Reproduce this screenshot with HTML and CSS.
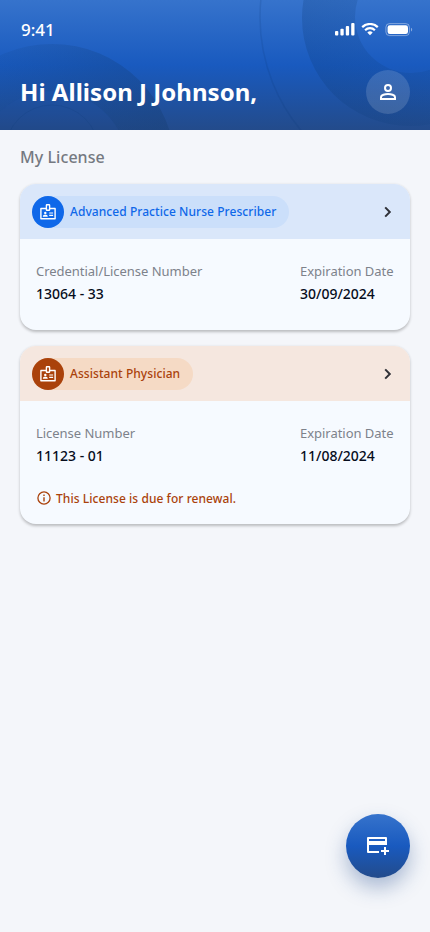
FILE: index.html
```html
<!DOCTYPE html>
<html lang="en">
<head>
<meta charset="utf-8">
<meta name="viewport" content="width=device-width, initial-scale=1">
<title>My License</title>
<link rel="stylesheet" href="styles.css">
</head>
<body>
<svg class="sprite" aria-hidden="true">
  <symbol id="badge" viewBox="0 0 16 16">
    <path fill="none" stroke="currentColor" stroke-width="1.4" stroke-linejoin="round" d="M6.200 4.500H.9v10.200h14.200V4.500H9.800"/>
    <rect x="6.400" y=".7" width="3.200" height="5.600" rx=".5" fill="none" stroke="currentColor" stroke-width="1.400"/>
    <circle cx="5.300" cy="9" r="1.200" fill="currentColor"/>
    <path fill="currentColor" d="M2.900 12.800v-.6c0-1 1.400-1.400 2.400-1.400s2.400.4 2.400 1.400v.6zM9.200 8.400h3.900v1.100H9.200zM9.200 10.800h3.900v1.100H9.200z"/>
  </symbol>
</svg>
<header class="header">
  <svg class="rings" viewBox="0 0 430 130" aria-hidden="true">
    <defs>
      <linearGradient id="fade-left" gradientUnits="userSpaceOnUse" x1="0" y1="60" x2="165" y2="100">
        <stop offset="0" stop-color="#0d3b77" stop-opacity=".1"/>
        <stop offset="1" stop-color="#153c70" stop-opacity=".34"/>
      </linearGradient>
      <linearGradient id="fade-right" gradientUnits="userSpaceOnUse" x1="310" y1="60" x2="430" y2="30">
        <stop offset="0" stop-color="#0d3b77" stop-opacity=".24"/>
        <stop offset="1" stop-color="#0d3b77" stop-opacity=".12"/>
      </linearGradient>
    </defs>
    <path fill="url(#fade-left)" fill-rule="evenodd" d="M-71 167a123 123 0 1 0 246 0a123 123 0 1 0-246 0zM-24 167a76 76 0 1 0 152 0a76 76 0 1 0-152 0z"/>
    <circle class="disc" cx="52" cy="167" r="76"/>
    <circle class="arc faint" cx="52" cy="152" r="47"/>
    <path fill="url(#fade-right)" fill-rule="evenodd" d="M302 18a108 108 0 1 0 216 0a108 108 0 1 0-216 0zM355 17a56 56 0 1 0 112 0a56 56 0 1 0-112 0z"/>
    <circle class="arc" cx="437" cy="17" r="177"/>
  </svg>
  <div class="status">
    <span class="time">9:41</span>
    <svg class="signals" width="78" height="14" viewBox="0 0 78 14" fill="#fff" aria-hidden="true">
      <rect x="0" y="8" width="3.300" height="4.600" rx="1"/><rect x="5.400" y="5.800" width="3.300" height="6.800" rx="1"/><rect x="10.800" y="3" width="3.300" height="9.600" rx="1"/><rect x="16.200" y="0" width="3.300" height="12.600" rx="1"/>
      <g fill="none" stroke="#fff" stroke-width="2.200"><path d="M27.200 4.100a11.300 11.300 0 0 1 15.600 0M30.100 7.200a7 7 0 0 1 9.800 0"/></g>
      <path d="M32.300 9.500a4.200 4.200 0 0 1 5.400 0L35 12.300z"/>
      <rect x="50.900" y=".6" width="23.500" height="12" rx="3.600" fill="none" stroke="#fff" stroke-opacity=".4"/>
      <rect x="52.600" y="2.200" width="20.400" height="8.800" rx="2.300"/><path d="M76 4.800c1.600.7 1.600 3 0 3.700z" opacity=".45"/>
    </svg>
  </div>
  <div class="greeting">
    <h1>Hi Allison J Johnson,</h1>
    <button class="profile" aria-label="Profile"><svg width="24" height="24" viewBox="0 0 24 24" fill="none" stroke="#fff" stroke-width="2"><circle cx="12" cy="8" r="3"/><path d="M5 19v-2c0-2 4-3 7-3s7 1 7 3v2z"/></svg></button>
  </div>
</header>
<main>
  <h2>My License</h2>
  <article class="card">
    <div class="card-head">
      <div class="chip"><span class="chip-icon"><svg width="16" height="16"><use href="#badge"/></svg></span>Advanced Practice Nurse Prescriber</div>
      <svg class="chevron" width="8" height="12" viewBox="0 0 8 12"><path d="M1.200 1.400 5.800 6l-4.600 4.600"/></svg>
    </div>
    <dl>
      <div><dt>Credential/License Number</dt><dd>13064 - 33</dd></div>
      <div><dt>Expiration Date</dt><dd>30/09/2024</dd></div>
    </dl>
  </article>
  <article class="card due">
    <div class="card-head">
      <div class="chip"><span class="chip-icon"><svg width="16" height="16"><use href="#badge"/></svg></span>Assistant Physician</div>
      <svg class="chevron" width="8" height="12" viewBox="0 0 8 12"><path d="M1.200 1.400 5.800 6l-4.600 4.600"/></svg>
    </div>
    <dl>
      <div><dt>License Number</dt><dd>11123 - 01</dd></div>
      <div><dt>Expiration Date</dt><dd>11/08/2024</dd></div>
    </dl>
    <p class="notice"><svg width="16" height="16" viewBox="0 0 16 16"><circle cx="8" cy="8" r="6.100" fill="none" stroke="currentColor" stroke-width="1.300"/><path fill="currentColor" d="M7.300 7.200h1.400v4.200H7.300zM7.300 4.600h1.400V6H7.300z"/></svg>This License is due for renewal.</p>
  </article>
</main>
<button class="fab" aria-label="Add license"><svg width="24" height="24" viewBox="0 0 24 24" fill="none" stroke="#fff" stroke-width="2"><path stroke-linejoin="round" d="M13 18H2V4h18v7"/><path stroke-width="4" d="M2 9h18"/><path d="M19 13v8M15 17h8"/></svg></button>
</body>
</html>
```
FILE: styles.css
```css
* { box-sizing: border-box; }
body {
  margin: 0;
  min-height: 932px;
  background: #f4f6fa;
  font-family: "Noto Sans", sans-serif;
  color: #060d1c;
}
h1, h2, dl, dd, p { margin: 0; }
button { border: 0; padding: 0; display: grid; place-items: center; border-radius: 50%; }
svg { display: block; flex: none; }
.sprite { position: absolute; width: 0; height: 0; }
.header {
  position: relative;
  height: 130px;
  padding: 20px 16px 0 20px;
  color: #fff;
  background: linear-gradient(180deg, #3673cc 0%, #195abf 50%, #234b8b 100%);
}
.rings { position: absolute; left: 0; top: 0; width: 430px; height: 130px; }
.disc { fill: #0d3b77; fill-opacity: .06; }
.arc { fill: none; stroke: #0d3b77; stroke-opacity: .16; stroke-width: 1.5px; }
.faint { stroke-opacity: .2; stroke-width: 1px; }
.status { position: relative; display: flex; justify-content: space-between; height: 20px; padding-left: 1px; }
.time { font-size: 17px; line-height: 20px; font-weight: 500; }
.signals { margin: 3px 1px 0 0; }
.greeting { position: relative; display: flex; align-items: center; justify-content: space-between; margin-top: 30px; padding-right: 4px; }
h1 { font-size: 24px; line-height: 32px; font-weight: 700; letter-spacing: .03px; }
.profile { width: 44px; height: 44px; background: rgba(255, 255, 255, .14); }
main { padding: 15px 20px 0; }
h2 { font-size: 16px; line-height: 24px; font-weight: 500; letter-spacing: .06px; color: #747981; }
.card {
  margin-top: 15px;
  height: 146px;
  border-radius: 16px;
  overflow: hidden;
  background: #f6faff;
  box-shadow: 0 1.5px 3px rgba(0, 0, 0, .24);
}
.card + .card { margin-top: 16px; }
.due { height: 178px; }
.card-head { height: 55px; padding: 0 18px 0 12px; display: flex; align-items: center; justify-content: space-between; background: #dae7fa; }
.chip { display: flex; align-items: center; width: 257px; height: 32px; gap: 6px; border-radius: 16px; background: #cbdffa; color: #0f68e9; font-size: 12px; font-weight: 500; letter-spacing: .06px; white-space: nowrap; }
.chip-icon { width: 32px; height: 32px; border-radius: 50%; display: grid; place-items: center; background: #0f68e9; color: #fff; }
.chevron { fill: none; stroke: #303238; stroke-width: 2; }
.due .card-head { background: #f5e7df; }
.due .chip { width: 161px; background: #f5dac5; color: #aa420b; }
.due .chip-icon { background: #aa420b; color: #fff; }
dl { display: flex; justify-content: space-between; padding: 22px 16px 0; }
dl > div:last-child { width: 94px; white-space: nowrap; }
dt { font-size: 13px; line-height: 20px; letter-spacing: -.03px; color: #7d828b; }
dd { margin-top: 3px; font-size: 14px; line-height: 20px; font-weight: 500; }
.notice { display: flex; align-items: center; gap: 4px; margin: 22px 16px 0; height: 20px; font-size: 12px; font-weight: 500; letter-spacing: .06px; color: #aa420b; }
.fab {
  position: fixed;
  right: 20px;
  bottom: 54px;
  width: 64px;
  height: 64px;
  background: linear-gradient(180deg, #3673cc 0%, #195abf 50%, #234b8b 100%);
  box-shadow: 0 10px 20px rgba(35, 75, 139, .35);
}
```
